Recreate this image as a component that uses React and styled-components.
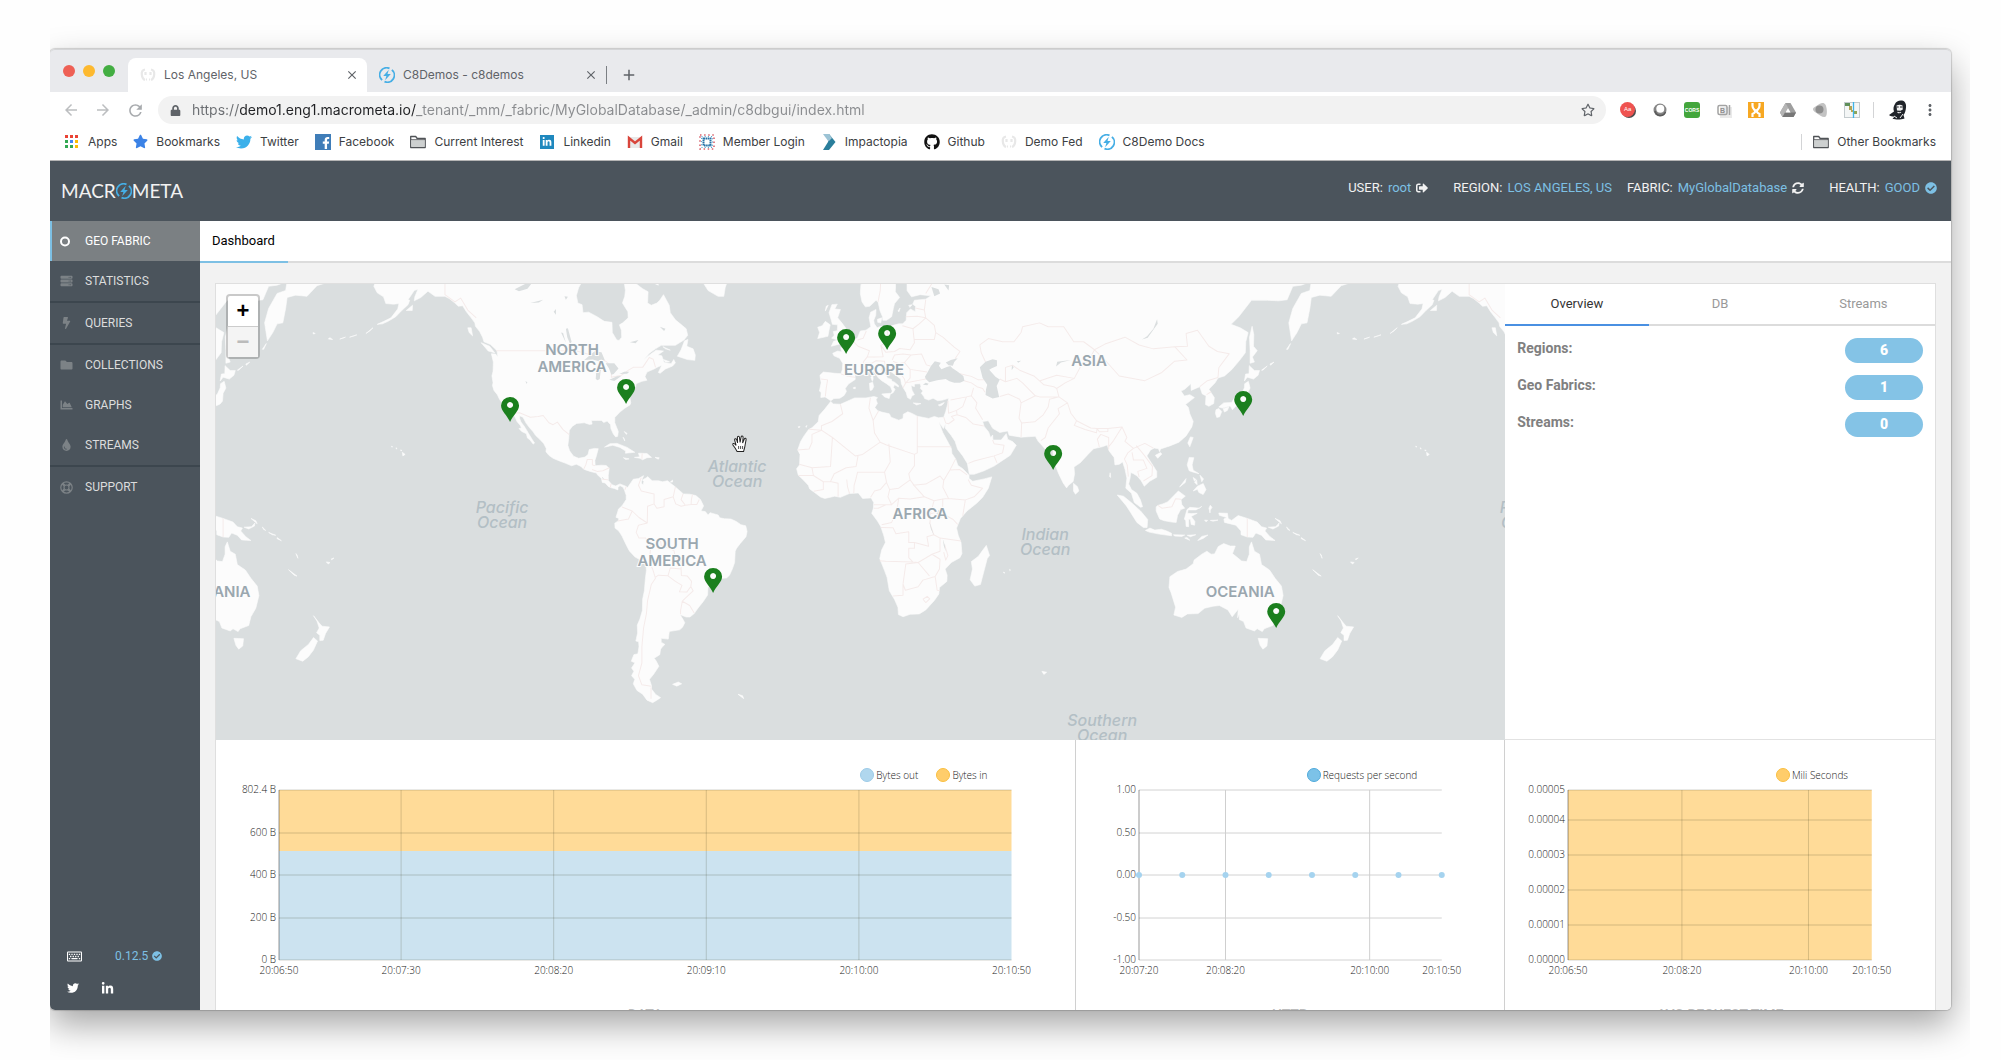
import React from "react";
import styled, { createGlobalStyle } from "styled-components";
import {
  FaBolt,
  FaChartArea,
  FaCheckCircle,
  FaFacebookF,
  FaFolder,
  FaGithub,
  FaLinkedinIn,
  FaLock,
  FaRegKeyboard,
  FaRegStar,
  FaServer,
  FaSignOutAlt,
  FaStar,
  FaSyncAlt,
  FaTint,
  FaTwitter,
} from "react-icons/fa";
import {
  MdAdd,
  MdArrowBack,
  MdArrowForward,
  MdClose,
  MdMoreVert,
  MdRefresh,
} from "react-icons/md";

const GlobalStyle = createGlobalStyle`
  * { box-sizing: border-box; }
  body { margin: 0; background: #fefefe; }
  button, input { font: inherit; margin: 0; padding: 0; border: 0; background: none; color: inherit; }
  a { color: inherit; text-decoration: none; }
  svg { display: block; flex: none; }
`;

/* ---------- brand marks and small drawings ---------- */

const C8Mark = ({ size = 16 }) => (
  <svg width={size} height={size} viewBox="0 0 16 16">
    <path
      d="M10.5 1.4a7 7 0 0 0-7.4 11.7M5.5 14.6a7 7 0 0 0 7.4-11.7"
      fill="none"
      stroke="#45aee5"
      strokeWidth="1.8"
    />
    <path d="M9.8 2.8 4.2 8.9h3.2l-1.3 4.4 5.7-6.2H8.5z" fill="#45aee5" />
  </svg>
);

const GhostMark = () => (
  <svg width="16" height="16" viewBox="0 0 16 16">
    <path
      d="M5 2.5C2.5 3 1.5 5 1.8 7.5 2 9.5 2.5 12 5 13M11 2.5c2.5.5 3.5 2.5 3.2 5-.2 2-.7 4.500-3.2 5.500M5.500 5v3M10.500 5v3M6 12.500h1M9 12.500h1"
      fill="none"
      stroke="#e8e8e8"
      strokeWidth="2.200"
    />
  </svg>
);

const appDots = [
  "#ea4335", "#ea4335", "#ea4335",
  "#34a853", "#4285f4", "#fbbc05",
  "#34a853", "#34a853", "#fbbc05",
];

const AppsMark = () => (
  <svg width="16" height="16" viewBox="0 0 16 16">
    {appDots.map((fill, i) => (
      <rect key={i} x={1 + (i % 3) * 5} y={1 + Math.floor(i / 3) * 5} width="3" height="3" fill={fill} />
    ))}
  </svg>
);

const FolderMark = () => (
  <svg width="16" height="16" viewBox="0 0 16 16">
    <path d="M.7 13.5v-11h5l1.5 2h8v9z" fill="#fff" stroke="#505357" strokeWidth="1.3" strokeLinejoin="round" />
    <path d="M1.4 6h13.2v6.9H1.4z" fill="#cdd0d0" />
    <path d="M1 5.6h14" stroke="#505357" strokeWidth=".8" />
  </svg>
);

const GmailMark = () => (
  <svg width="16" height="16" viewBox="0 0 16 16">
    <path d="M1 3h14v11H1z" fill="#e9e9e9" />
    <path d="M2 14V4l6 5 6-5v10" fill="none" stroke="#d9453b" strokeWidth="2.4" />
  </svg>
);

const MemberMark = () => (
  <svg width="16" height="16" viewBox="0 0 16 16">
    <rect x="4.500" y="4.500" width="7" height="7" fill="none" stroke="#2573a7" strokeWidth="2" strokeDasharray="1.6 .5" />
    <path d="M1 1h14v14H1z" fill="none" stroke="#d9636d" strokeWidth="1.6" strokeDasharray="1.5 2.6" />
    <path d="M2.500 2.500h11v11h-11z" fill="none" stroke="#4a9bca" strokeWidth="1" strokeDasharray="1 2.2" />
  </svg>
);

const ImpactMark = () => (
  <svg width="16" height="16" viewBox="0 0 16 16">
    <path d="M8 0l6.5 8L8 16H2l5-8z" fill="#2a7e9b" />
    <path d="M2 0h6l3 4-3.5 3.5z" fill="#9cc3d5" />
  </svg>
);

const FacebookMark = () => (
  <svg width="16" height="16" viewBox="0 0 16 16">
    <rect width="16" height="16" fill="#3f7db8" />
    <svg x="5" y="3" width="10" height="13">
      <FaFacebookF size={12} color="#fff" />
    </svg>
  </svg>
);

const LinkedinMark = () => (
  <svg width="16" height="16" viewBox="0 0 16 16">
    <rect x="1" y="1" width="14" height="14" fill="#1f88be" />
    <svg x="3" y="3" width="10" height="10">
      <FaLinkedinIn size={10} color="#fff" />
    </svg>
  </svg>
);

const GlossaryExt = () => (
  <svg width="16" height="16" viewBox="0 0 16 16">
    <circle cx="9" cy="9" r="7" fill="#4d4d4d" />
    <circle cx="7.5" cy="7.5" r="7.5" fill="#ef5350" />
    <text x="4" y="9" fontSize="6" fontFamily="Liberation Sans, sans-serif" fill="#fff">
      Aa
    </text>
  </svg>
);

const RingExt = () => (
  <svg width="16" height="16" viewBox="0 0 16 16">
    <circle cx="8" cy="8" r="6.5" fill="#858585" />
    <circle cx="8.3" cy="6.8" r="4" fill="#fff" />
    <path d="M3 9a5.5 5.5 0 0 0 10.500 1" stroke="#5a5a5a" strokeWidth="1.5" fill="none" />
  </svg>
);

const CorsExt = () => (
  <svg width="16" height="16" viewBox="0 0 16 16">
    <rect width="16" height="16" rx="3" fill="#43a63c" />
    <text
      x="8"
      y="10"
      textAnchor="middle"
      fontSize="5"
      fontWeight="700"
      fontFamily="Liberation Sans, sans-serif"
      fill="#fff"
    >
      CORS
    </text>
  </svg>
);

const BadgeExt = () => (
  <svg width="16" height="16" viewBox="0 0 16 16">
    <rect x="4" y="5" width="12" height="11" fill="#eaeaea" />
    <rect x="2" y="3.5" width="9" height="9" rx="1.5" fill="none" stroke="#a3a3a3" strokeWidth="1.5" />
    <path d="M13.5 3v10" stroke="#a3a3a3" strokeWidth="1.5" />
    <text x="4" y="10.500" fontSize="7" fontWeight="700" fontFamily="Liberation Sans, sans-serif" fill="#8f8f8f">
      B
    </text>
  </svg>
);

const HelixExt = () => (
  <svg width="16" height="16" viewBox="0 0 16 16">
    <rect width="16" height="16" fill="#f7a823" />
    <path d="M4.5 1v3q0 2 2 4t-2 4v3M11.5 1v3q0 2-2 4t2 4v3" fill="none" stroke="#fff" strokeWidth="2.2" />
    <path d="M6 8h4" stroke="#fff" strokeWidth="1.5" />
  </svg>
);

const DriveExt = () => (
  <svg width="16" height="16" viewBox="0 0 16 16">
    <path d="M5.5 1h5L16 10.5 13.500 15h-11L0 10.500z" fill="#9e9e9e" />
    <path d="M5.5 1 0 10.500 2.500 15 8 5.500z" fill="#b5b5b5" />
    <path d="M2.500 15h11l2.500-4.500H5z" fill="#777" />
    <path d="m8 6 2.6 4.500H5.400z" fill="#fff" />
  </svg>
);

const ConeExt = () => (
  <svg width="16" height="16" viewBox="0 0 16 16">
    <path d="M10 1c3-.5 4 2 4.500 5 .8 4 .5 9-2 9-3 0-5-2-8-4C1 9 0 7 2 5.500 4.500 4 7 1.500 10 1z" fill="#c3c3c3" />
    <circle cx="7.5" cy="7.5" r="4" fill="#8e8e8e" />
  </svg>
);

const GanttExt = () => (
  <svg width="16" height="16" viewBox="0 0 16 16">
    <rect x=".5" y=".5" width="15" height="15" fill="#f4f6f6" stroke="#c4cbce" />
    <rect x="1" y="1" width="5" height="3" fill="#5f8f5a" />
    <rect x="5" y="4" width="3" height="4" fill="#b3a355" />
    <rect x="7" y="8" width="3" height="2" fill="#c2a94e" />
    <rect x="10" y="9" width="3" height="3" fill="#8fa657" />
    <path d="M9.5 0v16" stroke="#3fb4e8" strokeWidth="1.3" />
  </svg>
);

const Avatar = () => (
  <svg width="20" height="20" viewBox="0 0 20 20">
    <path
      d="M7 4c1-2.500 4-4 7-3.500S18.500 4 18 7.500c-.3 3-1 5.500-2.500 7.500l1 3.500c-4 1.500-9 1-12 .5l2-2.500c-2 0-4.500 0-5.500-1.500l5-3.500C5 9 5.500 6 7 4z"
      fill="#20242a"
    />
    <path d="M8.500 5.500c2-1 4.500-1 6 0l.3 4-2.300 1.200-3.500-.2z" fill="#f3f3f3" />
    <path d="M8.500 7h2.200M12 7h2.500" stroke="#20242a" strokeWidth="1.2" />
    <path d="M9.500 12.300q2 1 3.500-.2" stroke="#eee" strokeWidth="1.2" fill="none" />
    <path d="m12 18 3-4M6 16l3 2" stroke="#eee" strokeWidth="1" />
  </svg>
);

const CircleIcon = () => (
  <svg viewBox="0 0 13 13">
    <circle cx="5" cy="6.5" r="4" fill="none" stroke="currentColor" strokeWidth="2" />
  </svg>
);

const LifebuoyIcon = () => (
  <svg viewBox="0 0 13 13">
    <g fill="none" stroke="currentColor">
      <circle cx="6.5" cy="6.5" r="5.7" strokeWidth="1.2" />
      <circle cx="6.5" cy="6.5" r="2.500" strokeWidth="1.2" />
      <path d="m2.600 2.600 2 2m3.800 3.800 2 2m0-7.800-2 2m-3.800 3.800-2 2" strokeWidth="2.2" />
    </g>
  </svg>
);

/* ---------- window and browser chrome ---------- */

const Page = styled.div`
  height: 100vh;
  padding: 49px 50px 50px;
`;

const Window = styled.div`
  height: 100%;
  display: flex;
  flex-direction: column;
  background: #fff;
  border-radius: 5px;
  box-shadow: 0 15px 35px rgba(0, 0, 0, 0.35), 0 0 1px 1px rgba(0, 0, 0, 0.16);
  clip-path: inset(-49px -19px -50px 0);
`;

const TabStrip = styled.div`
  height: 43px;
  flex: none;
  display: flex;
  align-items: flex-end;
  background: #e9eaed;
  border-top: 1px solid #d4d5d7;
  border-radius: 5px 5px 0 0;
  font: 12px/16px Inter, sans-serif;
  color: #5f6368;
`;

const Lights = styled.div`
  width: 78px;
  padding: 0 0 15px 13px;
  display: flex;
  gap: 8px;
`;

const Light = styled.button`
  width: 12px;
  height: 12px;
  border-radius: 50%;
  background: ${(props) => props.$color};
`;

const BrowserTab = styled.div`
  width: 239px;
  height: 34px;
  display: flex;
  align-items: center;
  gap: 8px;
  padding: 0 8px 0 12px;
  border-radius: 8px 8px 0 0;
  background: ${(props) => (props.$active ? "#fff" : "transparent")};

  span {
    flex: 1;
  }
`;

const NewTab = styled.button`
  height: 18px;
  margin-bottom: 8px;
  padding-left: 13px;
  border-left: 1px solid #7b7f83;
`;

const Toolbar = styled.div`
  height: 36px;
  flex: none;
  display: flex;
  align-items: center;
  padding: 0 12px 0 5px;
`;

const NavButton = styled.button`
  width: 32px;
  color: ${(props) => (props.$dim ? "#bcbec0" : "#a8abae")};

  svg {
    margin: 0 auto;
  }
`;

const Omnibox = styled.label`
  flex: 1;
  height: 28px;
  margin-left: 7px;
  display: flex;
  align-items: center;
  gap: 11px;
  padding: 0 11px 0 12px;
  border-radius: 14px;
  background: #f2f2f2;
  color: #5f6368;
`;

/* scheme and path are greyed, the host stays dark */
const Address = styled.input`
  flex: 1;
  font: 14px/20px Inter, sans-serif;
  color: transparent;
  background: linear-gradient(to right, #6b6e72 0 48px, #202124 48px 224px, #8a8c8f 224px);
  background-clip: text;
  outline: none;
`;

const Extensions = styled.div`
  display: flex;
  align-items: center;
  gap: 16px;
  padding: 0 13px 0 14px;
`;

const Rule = styled.span`
  width: 1px;
  height: 16px;
  background: #d3d4d6;
`;

const BookmarkBar = styled.nav`
  height: 33px;
  flex: none;
  display: flex;
  align-items: center;
  gap: 16px;
  padding: 0 15px 5px 14px;
  border-bottom: 1px solid #b5b5b5;
  font: 12px/16px Inter, sans-serif;
  color: #3c4043;
`;

const Bookmark = styled.a`
  display: flex;
  align-items: center;
  gap: 8px;
  white-space: nowrap;
`;

const OtherBookmarks = styled(Bookmark)`
  margin-left: auto;
  padding-left: 11px;
  border-left: 1px solid #d3d4d6;
`;

/* ---------- application ---------- */

const AppHeader = styled.header`
  height: 60px;
  flex: none;
  display: flex;
  align-items: center;
  justify-content: space-between;
  padding: 0 14px 0 11px;
  background: #4b545c;
  color: #f2f2f2;
  font: 13px/20px Roboto, sans-serif;
`;

const Logo = styled.a`
  display: flex;
  align-items: center;
  font: 19px/24px Lato, sans-serif;
`;

const Facts = styled.div`
  display: flex;
  align-items: center;
  padding-bottom: 6px;
`;

const Fact = styled.span`
  display: flex;
  align-items: center;
  gap: 5px;
  margin-left: ${(props) => props.$gap}px;

  a {
    color: #7dc0e4;
  }
`;

const Body = styled.div`
  flex: 1;
  min-height: 0;
  display: flex;
`;

const Sidebar = styled.aside`
  width: 150px;
  flex: none;
  display: flex;
  flex-direction: column;
  background: #4b545c;
  border-radius: 0 0 0 5px;
`;

const MenuItem = styled.a`
  height: ${(props) => (props.$ruled ? 42 : 40)}px;
  display: flex;
  align-items: center;
  gap: 12px;
  padding-left: ${(props) => (props.$active ? 8 : 10)}px;
  border-left: ${(props) => (props.$active ? "2px solid #7dc0e4" : "0")};
  border-bottom: ${(props) => (props.$ruled ? "2px solid #3c464e" : "0")};
  background: ${(props) => (props.$active ? "#7b8083" : "transparent")};
  color: ${(props) => (props.$active ? "#fff" : "#dcdddd")};
  font: 12px/16px Roboto, sans-serif;

  svg {
    width: 13px;
    color: ${(props) => (props.$active ? "#fff" : "#7c8286")};
  }
`;

const SideFoot = styled.div`
  margin-top: auto;
  padding: 0 17px 14px;
  color: #fff;
  font: 12px/16px Roboto, sans-serif;
`;

const SideRow = styled.div`
  height: 16px;
  display: flex;
  align-items: center;
  gap: ${(props) => props.$gap}px;
  margin-bottom: ${(props) => (props.$last ? 0 : 16)}px;
`;

const Version = styled.a`
  display: flex;
  align-items: center;
  gap: 4px;
  color: #7dc0e4;
`;

const Content = styled.main`
  flex: 1;
  min-width: 0;
  overflow: hidden;
  background: #f2f2f2;
  border-radius: 0 0 5px 0;
`;

const PageTabs = styled.div`
  height: 42px;
  background: #fff;
  border-bottom: 2px solid #dcdcdc;
`;

const PageTab = styled.button`
  width: 88px;
  height: 42px;
  padding-left: 12px;
  text-align: left;
  border-bottom: 2px solid #7dc0e4;
  font: 13px/16px Roboto, sans-serif;
  color: #000;
`;

const Board = styled.div`
  display: grid;
  grid-template-columns: 2fr 1fr 1fr;
  margin: 20px 15px 0;
  border: 1px solid #dfdfdf;
  background: #fff;
`;

const MapCell = styled.section`
  grid-column: span 2;
  position: relative;
  height: 456px;
  overflow: hidden;
  background: #dadedf;
`;

const ZoomControl = styled.div`
  position: absolute;
  top: 10px;
  left: 10px;
  display: flex;
  flex-direction: column;
  border: 2px solid rgba(0, 0, 0, 0.2);
  border-radius: 4px;
  background: #fff;
  background-clip: padding-box;
`;

const ZoomButton = styled.button`
  width: 30px;
  height: 30px;
  font: bold 22px/30px "Liberation Sans", sans-serif;
  color: #000;

  & + & {
    height: 31px;
    border-top: 1px solid #ccc;
  }

  &:disabled {
    background: #f4f4f4;
    color: #bbb;
  }
`;

const Summary = styled.section`
  border-bottom: 1px solid #e2e2e2;
`;

const SummaryTabs = styled.div`
  display: grid;
  grid-template-columns: repeat(3, 1fr);
  margin-bottom: 12px;
`;

const SummaryTab = styled.button`
  height: 42px;
  border-bottom: 2px solid ${(props) => (props.$active ? "#4a90e2" : "#dcdcdc")};
  color: ${(props) => (props.$active ? "#333" : "#999")};
  font: 13px/16px Roboto, sans-serif;
`;

const SummaryRow = styled.div`
  display: flex;
  justify-content: space-between;
  height: 37px;
  padding: 0 12px;
  color: #808080;
  font: bold 14px/20px Roboto, sans-serif;
`;

const Badge = styled.span`
  width: 78px;
  height: 25px;
  border-radius: 13px;
  background: #84c3e6;
  color: #fff;
  font-weight: 900;
  line-height: 25px;
  text-align: center;
`;

const ChartCell = styled.section`
  min-width: 0;
  padding: 27px 63px 0;
  border-right: 1px solid #d0d0d0;

  &:last-child {
    border-right: 0;
  }
`;

const Legend = styled.div`
  height: 16px;
  display: flex;
  justify-content: flex-end;
  gap: 18px;
  margin: 0 24px 7px 0;
  font: 300 10px/16px "Open Sans", sans-serif;
  color: #222;
`;

const LegendItem = styled.span`
  display: flex;
  align-items: center;
  gap: 2px;

  &::before {
    content: "";
    width: 12px;
    height: 12px;
    border-radius: 50%;
    background: ${(props) => props.$fill};
    border: 1px solid ${(props) => props.$edge};
  }
`;

const Plot = styled.svg`
  width: 100%;
  height: 170px;
  overflow: visible;

  text {
    font: 300 10px "Open Sans", sans-serif;
    fill: #222;
  }
`;

const ChartTitle = styled.h2`
  margin: 45px -63px 0;
  color: #bdbdbd;
  font: 500 14px/20px Roboto, sans-serif;
  text-align: center;
`;

/* ---------- world map, Mercator, 1024px per turn ---------- */

const WORLD = 1024;
const ZERO_X = 630;
const ZERO_Y = 227;

const project = (lon, lat) => [
  ZERO_X + (lon * WORLD) / 360,
  ZERO_Y - (WORLD / (2 * Math.PI)) * Math.log(Math.tan(Math.PI / 4 + (lat * Math.PI) / 360)),
];

const toPath = (ring) =>
  ring
    .trim()
    .split(/\s+/)
    .map((pair, i) => {
      const [x, y] = project(...pair.split(",").map(Number));
      return `${i ? "L" : "M"}${x.toFixed(1)} ${y.toFixed(1)}`;
    })
    .join("");

const land = [
  // Americas
  `-161,70 -161,64.6 -161.5,63.9 -160.8,63.6 -163,63.1 -164.8,63.2 -166,61.7 -164.8,60.6 -162.6,59.9 -161.8,58.7 -159,58.6 -157.2,58.7 -157.6,57.7 -160,56 -162.5,55.3 -164.8,54.7 -163,54.8 -161,55.3 -158.3,56.2 -156.2,57.4 -154,58.5 -153.4,59.3 -154,59.4 -151.8,61 -150.5,61.2 -151.6,59.9 -151.8,59.2 -149.5,59.8 -147,60.9 -144.5,60 -141,60 -139.5,59.6 -137.5,58.8 -136.3,58.2 -134.8,58.3 -133.5,57.2 -131.8,56 -130.5,55 -130.3,54.3 -128.8,53.2 -127.8,52 -127.3,51 -125,50.4 -123.2,49.3 -122.7,48.9 -122.4,47.5 -123.2,48.2 -124.7,48.3 -124,46.3 -124.1,44 -124.5,42.8 -124.1,41 -124.3,40.3 -123.8,39 -122.6,37.8 -121.9,36.6 -120.6,35 -120.4,34.4 -118.6,34 -117.3,33 -117,32.3 -116.2,31 -115.7,30 -114.5,28.8 -114.1,28 -115,27.8 -114,26.9 -112.4,26.2 -112,24.8 -111.2,24.3 -110,22.9 -109.5,23.2 -110.3,24.3 -111.3,25.8 -112.3,27.3 -113.2,28.6 -114.3,29.8 -114.8,31 -114.8,31.7 -113.6,31.3 -112.5,29.5 -111.2,28 -110,26.8 -109.2,25.7 -107.8,24.5 -106.3,23.1 -105.4,21.5 -105.5,20.4 -104.5,19.2 -103,18.2 -101,17.4 -98.8,16.6 -96.5,15.7 -94.8,16.2 -93.2,15.5 -92.2,14.5 -90,13.8 -87.7,13.2 -87.5,12.7 -86,11.3 -85.7,10 -84.7,9.8 -83.6,8.6 -82.8,8.2 -81.5,7.9 -80.2,7.4 -80.2,8.2 -79.5,8.9 -78.4,8.3 -77.9,7.3 -77.3,5.5 -77.3,4 -78.8,1.8 -80,0.7 -80.3,-0.3 -80.9,-2.2 -79.9,-2.6 -80,-3.4 -81.3,-4.3 -81.2,-6 -79.9,-7 -78.8,-8.8 -77.2,-12 -76.2,-13.9 -74.3,-15.9 -71.5,-17.4 -70.3,-18.4 -70.2,-20.5 -70.6,-23.5 -70.9,-27 -71.5,-29.5 -71.6,-33 -72.5,-35.5 -73.4,-37.2 -73.3,-39.4 -73.9,-41.5 -72.9,-41.7 -72.8,-43 -73.2,-44.8 -74.6,-45 -75.5,-46.6 -74.2,-47 -75.4,-48.2 -74.6,-49 -75.4,-50 -74.3,-50.8 -74.8,-51.8 -73.5,-53.2 -71.5,-54 -70,-55.2 -68,-55.7 -66.5,-55.2 -65.2,-54.7 -67,-54 -68.4,-52.9 -68.4,-52.2 -69.1,-50.8 -67.7,-49.7 -65.8,-47.8 -66.9,-46.4 -67.5,-45.9 -65.5,-45 -65.2,-43.6 -64.4,-42.9 -63.7,-42.4 -65,-41.8 -65,-40.8 -62.5,-41 -62.2,-39.1 -61.8,-38.9 -58.5,-38.5 -57.5,-37.8 -56.7,-36.5 -57.3,-35.6 -58.4,-34.2 -57.8,-34.4 -56.2,-34.9 -54.9,-34.9 -53.4,-33.9 -52.1,-32.3 -50.2,-30.3 -48.7,-28.3 -48.6,-26 -47,-24.6 -44.5,-23.1 -42,-22.9 -41,-22 -40,-20 -39.2,-17.8 -39,-14 -38.5,-13 -37.2,-11.3 -35.2,-9 -34.8,-7.2 -35.3,-5.2 -37,-4.8 -38.6,-3.7 -40.5,-2.8 -42.8,-2.7 -44.4,-2.4 -45,-1.4 -47.8,-0.6 -48.5,-1.4 -49.5,-0.2 -51,0 -50.1,1.8 -51.2,4 -52.8,5.4 -55,5.9 -57.2,6 -58.8,7.4 -60,8.4 -61.8,9.8 -62.8,10.6 -64.5,10.2 -66,10.6 -68.2,10.6 -69.8,12 -70.2,11.6 -71.5,10.9 -71.2,9.2 -72,9.8 -71.7,11.2 -71.2,12.3 -73,11.3 -74.8,11.1 -75.6,10 -76.8,8.2 -77.5,8.7 -79.5,9.5 -81,8.8 -82.3,9.2 -83.6,10.7 -83.6,12.5 -83.3,14.8 -84.3,15.8 -86,15.9 -88.2,15.7 -88.3,17.5 -87.8,19 -87.1,21.4 -88.5,21.5 -90.3,21.1 -90.7,19.5 -91.8,18.6 -94,18.2 -95.8,18.9 -97.2,20.7 -97.8,22.5 -97.5,24.8 -97.3,27.2 -96.3,28.5 -94.7,29.4 -92,29.6 -90.2,29.1 -89.3,29.2 -89.5,30.3 -87.5,30.3 -86,30.3 -85.2,29.7 -84,30.1 -82.8,29 -82.7,27.8 -81.8,26.1 -81,25.2 -80.3,25.4 -80.1,26.9 -81.3,29.6 -81.3,31.2 -79.5,32.8 -77.9,33.9 -76,34.9 -75.7,35.5 -76,36.9 -76.3,38.8 -75.7,37.8 -75,38.5 -74.9,39.2 -74,40 -73.8,40.8 -71.8,41.4 -70,41.7 -70.7,42.6 -70,43.8 -67.5,44.6 -66.2,45.1 -64.8,45.5 -66,43.7 -65.4,43.5 -63.5,44.6 -61,45.3 -60,46.1 -60.6,46.9 -61.5,45.9 -64,46.2 -64.8,47.8 -66.2,48 -64.2,48.9 -66.8,49.1 -69.5,47.8 -71,46.9 -69.2,48.4 -67,49.4 -65,50.2 -60,50.2 -57,51.4 -55.7,52.4 -56.2,53.8 -58.5,54.9 -60,55.6 -61.8,57 -62.2,58.4 -64.2,60.3 -65.5,59.3 -66.5,58.8 -68.5,58.4 -69.8,58.8 -69.6,60.8 -71.5,61.3 -74,62.2 -78,62.5 -77.6,61 -77.8,60 -78.6,58.8 -76.7,57.2 -76.6,56 -78.5,55 -79.7,54.6 -79,53.5 -78.9,52 -79.8,51.3 -80.6,51.4 -82.2,53 -82.3,55.1 -85,55.3 -87.5,56.2 -90.5,57.1 -92.5,57 -92.8,58.5 -94.3,58.8 -94.8,60.1 -94,61.5 -92.5,62.7 -90.7,63.5 -92,64.3 -88,64.3 -87,66 -86,70`,
  `-128.3,50.8 -125.3,50 -123.5,48.5 -125.8,48.9`,
  `-133,54 -131.8,54 -131.3,52.3 -132.5,53`,
  `-154.6,57.4 -152.4,58.4 -152.5,57.4`,
  `-59.3,47.7 -58,49.2 -56.8,51.2 -55.6,51.5 -56,50 -53.8,49.4 -53,48 -53.2,46.7 -55.8,46.9`,
  `-64.4,49.9 -61.8,49.1 -63.5,49.4`,
  `-64.2,46.9 -62.1,46.4 -63.5,46.3`,
  `-78,66 -78,64.4 -74,64.4 -71,62.9 -66,61.9 -66.5,62.8 -68.8,63.7 -65,63 -64.5,64 -66,66`,
  `-54,66 -52,64.4 -50.5,62.5 -48.5,61 -45,60 -43,60 -42.5,61.5 -41,63.5 -40,66`,
  `-84.9,21.9 -83,23 -80.5,23.1 -77,21.8 -74.3,20.2 -77.6,19.9 -77.5,20.6 -79.5,21.8 -82,22.5`,
  `-74.4,18.5 -72.5,18.2 -71.5,17.7 -70,18.4 -68.4,18.5 -70,19.8 -73,19.9 -72.6,18.7`,
  `-78.3,18.4 -76.3,18 -77.5,17.8`,
  `-67.2,18.5 -65.7,18.4 -66,17.9`,
  `-61.8,10.1 -61,10.8 -61,10.1`,
  `-78.4,25.1 -77.8,23.9 -78,24.6`,
  `-78,26.9 -77,26.3 -77.2,26`,
  `-61,-51.9 -59,-51.4 -57.8,-51.8 -59.5,-52.3`,
  `-38,-54 -36.4,-54.3 -36,-54.9`,
  `-156,20.2 -155,19.5 -155.8,19`,
  `-156.6,21 -156.1,20.8 -156.5,20.7`,
  `-158.2,21.7 -157.8,21.4 -158.1,21.3`,
  `-159.8,22.2 -159.4,22 -159.7,21.9`,
  `-167.5,53.3 -166.3,54 -168.8,52.8`,
  `-173,52.3 -172,52.5 -174.5,52`,
  `-177,51.8 -176,52 -178,51.6`,
  `178.5,51.9 179.5,51.5 178,51.6`,
  `172.6,53 173.4,52.8 172.7,52.7`,
  // Eurasia and Africa
  `12,80 12,66 11,64.6 9.5,63.7 7,62.9 5.2,62 5,60.5 5.6,59 6.8,58.1 8.3,58.2 10.5,59.3 11.3,58.9 11.9,57.4 12.8,56.2 12.9,55.5 14.2,55.5 16,56.2 16.6,57.8 17,58.7 18.8,59.8 17.3,60.8 17.4,62.2 19.5,63.4 21,64.6 24,65.8 25.3,65 22.5,63.6 21.4,62.5 21.4,61 23,59.9 26,60.3 29.8,60.1 28,59.5 24,59.3 23.4,58.6 24.4,58.2 24.3,57.2 22.6,57.7 21.3,57 21.1,55.5 19.9,54.8 18.5,54.8 16.5,54.5 14.2,53.9 12.3,54.3 10.9,54 9.9,54.8 9.7,55.5 10.4,56.5 10.5,57.6 8.6,57.1 8.1,56 8.7,54.2 7,53.5 5,53.3 4,51.9 2.5,51.1 1.6,50.2 0.2,49.7 -1.3,49.5 -1.9,49.7 -1.5,48.7 -3,48.9 -4.7,48.4 -4.3,47.8 -2.3,47.2 -1.2,46 -1.3,44.5 -1.8,43.4 -4,43.5 -8,43.8 -9.2,43 -8.8,41 -9.4,38.8 -8.8,38.4 -8.9,37 -7.4,37.2 -6.3,36.6 -5.4,36.1 -4.3,36.7 -2.2,36.8 -0.7,37.6 0.1,38.7 -0.3,39.5 0.8,40.7 3.2,41.9 3.1,43.1 4.5,43.4 6.5,43.1 8.8,44.4 10.3,43.5 11.2,42.4 12.5,41.6 14.2,40.8 15.6,40 16.2,38.8 15.7,38 16.6,38.4 17.2,39.3 16.6,39.8 17,40.5 18.4,39.9 18.4,40.3 17,41.2 16,41.5 16,41.9 14.5,42.3 13.6,43.5 12.3,44.3 12.4,45.4 13.6,45.7 13.7,45 14.5,45.2 15.2,44.2 17.5,43 19.2,42 19.4,40.8 20.2,39.5 21.1,38.4 21.6,37 22.6,36.5 23.2,37.5 24,37.8 23.2,39 22.8,40.3 24,40 24,40.7 26,40.8 26.3,40.1 26.1,39.5 27,38.8 26.4,38.2 27.3,37.3 27.6,36.7 29,36.3 30.6,36.8 32.2,36.1 34,36.3 36,36.8 35.8,35.5 35,33 34.3,31.3 32.5,31.1 31,31.5 29,30.9 25,31.6 23,32.5 21.7,32.9 20.1,32.2 20,30.9 18.5,30.4 15.8,31.3 15.2,32.3 12.5,32.8 11.1,33.2 10.1,34.2 11,35.3 10.5,36.4 11,37 9.8,37.3 7,36.9 3,36.9 0,35.8 -2,35.1 -4.5,35.2 -5.4,35.9 -6.2,35.1 -7.5,33.7 -9.5,31.8 -9.8,29.9 -12,28.1 -13.2,27.5 -14.8,25.5 -16,23.7 -17,21 -16.2,19.5 -16.4,16 -17.4,14.7 -16.8,12.5 -15,10.8 -13.3,9 -12.8,7.7 -11.2,6.6 -9,4.9 -7.5,4.4 -4,5.2 -2,4.8 1.1,6.1 4.3,6.3 5.8,4.4 7.2,4.5 8.8,4.6 9.7,3 9.6,1 9,-0.8 11,-3.5 12.2,-5.5 13.3,-8.8 13.8,-11 12.5,-13.5 11.8,-16.5 13.5,-20.5 14.4,-22.8 15.2,-27 17,-29.7 18.2,-32 18.4,-34.2 20,-34.8 22.5,-34.1 25.7,-34 28,-32.8 31,-30 32.6,-28 32.8,-26 35.4,-24 35.5,-22 34.8,-20 37,-17.8 40,-16.2 40.7,-14.8 40.4,-11 39.4,-8.5 38.8,-6 40.2,-2.6 42.5,0 46,2.8 48,4.8 50,8 51.2,11.9 48.5,11.2 44.5,10.4 43.2,11.4 43.2,12.5 41,14.7 39.3,15.8 38.5,18 37.2,19.8 37,21.5 35.5,24 34,26.5 32.6,29.8 34.2,27.8 34.9,29.4 34.8,28 36.8,25.8 38.3,23.8 39.2,21.2 41,19 42.6,16.5 43.3,12.8 45,12.8 48.5,14 52,15.6 55,17.5 57.7,19.2 59.8,22.5 58.5,23.7 56.8,24.4 56.3,26.2 54.5,24.2 51.6,24.2 51.5,25.8 50.8,24.9 50.1,26.7 48.5,28.5 48,30 50,30.2 51.5,27.9 54,26.6 56.8,27.1 57.3,25.7 61.5,25.1 66.5,25.4 67.5,23.8 69,22.3 70.3,20.9 72.7,21 72.8,19 73.5,16 74.7,13 76.3,9.8 77.5,8.1 78.2,9 79.8,10.3 80.3,13 80.1,15.3 82.3,16.7 85,19.5 87,21.4 90,22 91.8,22.6 92.4,20.7 94.2,18.5 94.5,16 96,16.2 97.2,17 98,14.5 98.7,11.5 98.3,8 100.3,6.2 101.3,3 103.5,1.3 104.2,1.5 103.4,4 102.2,6.2 100.3,7.5 99.3,9.5 99.8,11.5 100.1,13.4 101,13 102.3,12.2 103.7,10.6 104.8,8.7 106.7,10.4 109.2,11.8 109.2,13.8 107.2,16.8 105.7,19 107,21 108.3,21.6 109.8,21.4 110.2,20.4 110.5,21.3 113.8,22.3 117,23.5 119.5,25.5 121.5,28.3 122,30 120.8,32.3 120.3,34.2 119.3,35 122.4,37 120.8,37.8 118.9,37.4 117.7,38.8 119,39.3 121.2,40.8 121.3,39 124.3,40 125.2,38 126.5,37.5 126.3,35 127.5,34.5 129.2,35.3 129.4,37 127.5,39.3 129.7,41 130.7,42.3 133,42.8 135.5,44.4 138.3,46.7 140.3,48.5 140.5,51 141.3,53 138.5,54 135.3,54.7 138,56.2 142.5,59.3 148,59.3 152,59.2 155,59.4 157,61.7 160,61.9 163.5,62.5 163,61 160,60.5 157,57.8 155.6,55 156.6,51.2 158.5,53 160,54.8 162,55 163,57.8 163.5,59.8 166.5,60.2 170.5,60 174,61.8 179.3,62.6 178,64.5 180,66 180,80`,
  `-5.2,50 -3.5,50.3 1.3,51.1 0.8,51.6 1.7,52.7 0.3,53 -0.2,54 -1.5,55 -3,56 -2,57.6 -4,57.7 -3.1,58.6 -5,58.5 -6,57 -5.3,55.7 -4.8,54.7 -3,54.6 -3.1,53.4 -4.5,53.2 -4.2,52.4 -5.1,51.8 -3,51.4 -4.4,51.1`,
  `-10,51.7 -6.4,52.2 -6,53.5 -5.6,54.6 -7.3,55.3 -8.4,54.4 -10,54.1 -9.3,53`,
  `-7,58.2 -6.3,58.4 -7.3,57.3`,
  `11,55.7 12.5,56 12.2,55 11.1,55.1`,
  `18.2,57.3 19,57.9 18.6,57.2`,
  `22,58.4 23.2,58.5 22.4,58`,
  `8.7,42.5 9.4,43 9.5,42 9.2,41.4`,
  `8.2,40.9 9.3,41.2 9.7,40 9.1,39.1 8.4,39`,
  `12.5,38 15.6,38.2 15.1,36.7 13.5,37.2`,
  `23.6,35.5 26.3,35.3 24.8,34.9`,
  `32.4,34.9 34.5,35.6 33.8,34.9 32.9,34.6`,
  `2.4,39.6 3.2,39.9 3.2,39.4`,
  `-16.8,28.4 -16.2,28.5 -16.6,28`,
  `-14.2,28.3 -13.8,28.8 -14,28.2`,
  `49.3,-12 50.4,-15.5 49.6,-16.5 47.2,-25 45.2,-25.5 43.6,-23.5 44.4,-20 44,-17.5 46.5,-15.7 48,-13.7`,
  `55.3,-21 55.8,-21.2 55.5,-21.4`,
  `57.4,-20.1 57.8,-20.3 57.5,-20.5`,
  `68.8,-49 70.5,-49.2 69.5,-49.7`,
  `79.9,9.7 81.3,8.5 81.8,7 80.6,5.9 79.9,7`,
  `92.8,13.3 93,11.7 92.6,12`,
  `95.3,5.6 97.5,5.2 100.4,2.8 103.5,0 106,-3 105.8,-5.8 104.5,-5.8 102.2,-4 100,-0.5 98.5,1.8`,
  `105.2,-6.8 106.8,-6 108.5,-6.7 110.8,-6.4 112.7,-7 114.4,-7.8 114.4,-8.7 110,-8.1 106.5,-7.4`,
  `115,-8.3 119,-8.4 118,-8.9 115.5,-8.8`,
  `119.9,-8.5 122.9,-8.3 121,-9`,
  `119,-9.5 120.8,-10.2 119.8,-9.3`,
  `123.6,-10.3 125,-8.9 127.2,-8.4 125.5,-9.6`,
  `109,1.5 109.7,2 111.3,2.5 113,3.2 115.2,5.4 116.8,7 119.2,5.2 117.7,4 118,2.3 119,1 117.6,0.5 116.5,-1.5 116,-4 114.5,-3.9 111.8,-3.4 110.2,-2.8 109,0`,
  `119.8,0.5 120.8,1.3 124.2,1 125,1.6 123,0.4 120.2,0.4 120,-0.8 121.5,-0.9 123.4,-0.8 121.3,-1.9 122.6,-3.7 122.5,-5 121.3,-4.7 121,-2.8 120.4,-3 120.4,-5.5 119.5,-5.4 119.4,-3.4 118.9,-2.8`,
  `127.5,1 128,2 128.6,1.3 128,0.3 127.9,-0.7`,
  `128,-3.3 130.7,-3.2 129,-3.6`,
  `126,-3.2 127.1,-3.3 126.5,-3.8`,
  `131,-0.7 134,-0.8 134.3,-2.6 135.5,-3.3 137.8,-1.6 141,-2.6 144.5,-3.9 146,-5.5 147.8,-6 147.2,-7 149,-9 150.8,-10.3 147.5,-10.1 146,-8.5 144,-7.7 143,-9.2 141,-9.1 138.8,-8.3 138.8,-7 137,-5 133,-4 132.8,-2.8 133.8,-2.3 131.2,-1.5`,
  `148.4,-5.7 151,-5.5 152.2,-4.2 152,-5.3 150,-6.3`,
  `150.8,-2.6 153,-4.5 152.5,-3.4`,
  `154.8,-5.6 156,-6.8 155.3,-6.5`,
  `157,-7.5 159.5,-8.5 158.3,-8.3`,
  `160,-9.3 161.5,-10.4 160,-9.7`,
  `166.6,-14.8 167.3,-16.4 167,-15.3`,
  `164,-20.2 167,-22.3 166,-22`,
  `177.3,-17.6 178.6,-17.8 178,-18.3`,
  `179,-16.6 180,-16.3 179.2,-16.9`,
  `120.6,18.5 122.2,18.4 121.6,16 122,14.2 124,13 121.5,13.7 120.6,14 119.9,16`,
  `122,11.7 123,11 122.4,10.5`,
  `123.2,10.9 123.4,9.2 122.5,10`,
  `124.4,12.5 125.6,11.2 125,10.2`,
  `122,7 123.5,8.7 125.5,9.6 126.5,7.5 125.5,5.8 124,6.5 123.5,7.6`,
  `117.2,8.4 119.5,11.3 119.2,10`,
  `121,25.2 122,25 120.8,22 120.1,23.2`,
  `108.7,19.2 110.5,20.1 111,19.6 109.5,18.2`,
  `130,33.5 131,33.9 132,33 131.3,31.4 130.3,31.2 129.8,32.5`,
  `132.5,33.8 134.5,34.3 134,33.3 133,32.8`,
  `131,34.3 132.7,35.5 135.5,35.6 136.8,37.3 137.3,36.8 139,38 140,39.7 140.1,40.8 141.4,41.4 142,39.6 141,38.2 140.8,36 140,35.2 138.8,34.7 137,34.6 135.8,33.5 135,34.6 132.2,34`,
  `140,41.5 140.4,43.3 141.6,43.4 141.7,45.4 143.5,44.2 145.3,44.2 144.8,43 143.2,42 141,42.5`,
  `142,46 142,49 141.8,52 142.7,54.3 143.3,52.5 143.2,50 144.5,49 142.8,47.5 143.5,46.3`,
  `146,44.3 148,45.3 146.5,44.3`,
  `149,45.8 150.4,46.3 149.2,45.5`,
  `154.8,49.3 156.2,50.6 155.3,49.3`,
  `142.5,-10.8 143.5,-14 145.3,-15 146,-18.5 148.8,-20.3 150.8,-23 153,-25.5 153.6,-28.5 152.5,-32.3 150.8,-34.8 150,-37.3 147,-38.2 146.3,-39 144.5,-38.2 143.5,-38.8 140.6,-38 139.7,-36.2 138.2,-35.6 138.2,-34 137.6,-35.1 137.8,-32.6 135.7,-34.8 134.2,-32.8 131.2,-31.5 129,-31.7 126,-32.3 123.7,-33.9 120,-34 118,-35 115.2,-34.3 115.8,-32 114.2,-27.5 113.5,-26 113.8,-22.5 116.5,-20.8 119.5,-20 122,-18.2 122.3,-17 125,-15 126.8,-14 128.3,-15 129.5,-14.9 130.8,-12.4 132.7,-11.4 135,-12.2 136.8,-12.2 135.8,-14.8 139,-17.3 140.8,-17.5 141.7,-15 141.7,-12.5`,
  `144.8,-40.8 148.2,-40.9 147.9,-42.8 146.5,-43.6 145.5,-42.6`,
  `172.8,-34.5 174.8,-36.6 175.8,-37.5 178.4,-37.7 177,-39.5 176.2,-41.3 175,-41.4 175,-40 173.9,-39.3 174.8,-38 174,-36`,
  `172.8,-40.6 174.2,-41.5 172.8,-43.8 171,-45.5 169,-46.6 166.6,-46 168.3,-44 171,-42.4`,
];

const lakes = [
  `28,42 27.7,42.6 28.7,43.8 29.8,45.3 31.2,46.5 33.3,46.1 32.6,45.4 33.5,44.5 35.4,45.1 36.6,45.3 37.4,44.8 39,44 41.2,42.8 41.6,41.6 40,41 38,41 36.3,41.4 35,42 32,41.7 29.2,41.2`,
  `35,46.2 36.8,46.8 39.2,47.2 38,46.3 37.5,45.4 36,45.5`,
  `27,40.5 28,41 29,40.8 28.5,40.4`,
  `47,45 49,46.4 51.5,47 53,46.7 53,45.3 51.2,44.8 50.3,44.4 52.5,42.6 54,41.9 52.9,40.2 53.8,37.2 51.5,36.7 49,37.7 49.2,39.3 49.6,40.5 48,42.3`,
  `58.3,45.5 58.2,44.3 58.9,45`,
  `60,46.5 61.5,46.6 60.5,46.1`,
  `73.8,45.2 74.2,46.4 79,46.8 75.5,46.2`,
  `104,51.5 106,51.9 109.5,54.8 109.3,55.7 108,53.8 105.8,52.2`,
  `30,61.6 31,60 33,60.5 32.5,61.2`,
  `34.5,62 36,61 36.2,61.9`,
  `31.8,-0.8 31.8,-2.4 33.5,-2.3 34,0.2 32.5,0.3`,
  `29.2,-3.5 29.8,-6.3 30.9,-8.7 30,-6`,
  `34,-9.8 34.7,-12 35,-14.2 34.3,-12`,
  `-92,46.8 -90,48 -88.5,48.8 -86,48.6 -84.8,46.7 -87,46.5 -89,46.9`,
  `-88,42 -87.9,43.5 -87.2,45.3 -85.2,45.8 -86.3,44 -86.6,42 -87.4,41.7`,
  `-84.5,46 -81.5,46 -80,44.7 -81.7,43.3 -82.5,43.1 -83.4,44.8`,
  `-83.2,41.8 -81.5,41.5 -79,42.8 -80.5,42.7`,
  `-79.7,43.3 -77,43.4 -76.2,43.9 -78,43.9`,
  `-98.5,53.8 -97.8,53.9 -96.5,51 -97,50.5 -98,52`,
  `-100.2,53 -99.5,52.9 -98.5,50.8`,
  `-116.5,61.2 -112,62.3 -109.5,62.8 -112,61.3 -115,60.9`,
  `-111,58.8 -106.5,59.4 -108,58.9`,
  `-102.8,57.2 -102,57.7 -102,56.6`,
  `-99,60 -97.8,59.9 -98.5,59.4`,
  `-76,50.9 -73,51.4 -74,50.7`,
  `-65.5,54.2 -63.5,53.8 -64,53.3`,
  `-112.7,41.6 -112,41 -112.4,40.8`,
  `-85.9,12 -85,11.2 -85.6,11.4`,
  `-71.8,10.6 -71.2,10.5 -71.5,9.3`,
];

const borders = [
  `-123,49 -95,49 -89.5,48 -84.5,46.5 -82.5,45.3 -82.5,42.5 -79,43 -76.5,44.3 -74.8,45 -71.5,45 -69.2,47.4 -67.8,47 -67,45`,
  `-141,70 -141,60.3 -137.5,59 -135.5,59.7 -133,57.5 -130,56`,
  `-117,32.5 -114.8,32.6 -111,31.3 -108.2,31.5 -106.5,31.8 -104.5,29.6 -103,29 -101.5,29.8 -99.5,27.5 -97.3,25.9`,
  `-92.2,14.6 -91.5,16 -91,17.8 -89.2,17.8 -89.2,16 -88.3,15.7`,
  `-89.3,14.4 -87.5,13.8 -85.5,14 -83.2,15`,
  `-85.7,11.1 -83.7,10.9`,
  `-82.9,8.3 -82.6,9.5`,
  `-77.3,8.5 -77.8,7.4`,
  `-72,11.7 -73,9 -72,7 -67.5,6 -67.5,2.5 -69.8,1.7 -69.9,-4.2 -72.8,-2.3 -75.2,0 -78.8,1.4`,
  `-75.2,0 -76.5,-2.8 -80.3,-3.5`,
  `-69.9,-4.2 -73,-5 -73.8,-7.5 -72.8,-9.5 -70.5,-9.5 -69.5,-11 -68.7,-12.6 -69,-16 -69.5,-17.5 -68,-20 -67,-23 -68.5,-25 -69.8,-30 -70.2,-34 -71.2,-38 -71.8,-43 -71.8,-47 -73,-50 -71.8,-52 -68.5,-52.3`,
  `-68.6,-52.6 -68.6,-54.9`,
  `-69.5,-11 -65.3,-10 -65,-12 -60.5,-13.8 -60,-16.2 -58,-17.5 -58,-20 -61.8,-19.6 -62.6,-22.2 -66,-22 -67.2,-22.8`,
  `-62.6,-22.2 -60,-24 -57.7,-25.3 -58.6,-27.3 -56,-27.4 -54.6,-25.6 -54.3,-24 -55.8,-22.3 -57.9,-22.1 -58,-20`,
  `-54.6,-25.6 -53.8,-27 -57.6,-30.2 -58.2,-33 -58.2,-34`,
  `-57.6,-30.2 -55,-31.5 -53.4,-33.7`,
  `-67.5,2.5 -66.5,1 -64,1.5 -64,4 -60.8,5 -60,8.4`,
  `-60.8,5 -59.9,2.5 -58,1.7 -56.5,2 -54.5,2.3 -52.5,2.3 -51.6,4`,
  `-57.3,6 -58,4 -56.5,2`,
  `-54,5.8 -54.4,4 -54.5,2.3`,
  `-71.7,19.8 -71.8,18`,
  `11.2,59 12,61 12.2,63 14,66`,
  `-8.8,42 -6.5,41.8 -7,39.6 -7.3,37.3`,
  `-1.8,43.3 0.7,42.7 3.2,42.5`,
  `2.5,51.1 4.2,50 6.2,49.5 8.2,49 7.5,47.6 6,46.3 7,44 7.5,43.8`,
  `4,51.4 6,51.8 7.1,53.3`,
  `7.5,47.6 9.6,47.5 13,47.6 12.2,50.2 15,51 14.3,53.9`,
  `6.8,46 9,46 10.5,46.6 13.5,46.5 13.7,45.7`,
  `12.2,50.2 14,48.6 17,48.8 18.8,49.5 22.5,49.2 24,50.8 23.5,53.8 19.8,54.4`,
  `16.2,46.8 17,48 20,48.2 22.8,48 20.5,46.2 18.5,45.9 16.5,46.5`,
  `22.8,48 26.5,48.2 28.2,45.6 29.6,45.3`,
  `20.5,46.2 22.5,44.5 28.5,43.8`,
  `22.5,44.5 22.5,42.3 21,41 23,41.3 26.4,41.8 28,42`,
  `16,45 19,44.9 19.2,43.3 20.5,42 20.9,40.9 20,39.7`,
  `23.5,53.8 25.7,54.8 28,56 27.5,57.5 28,59.4`,
  `21,56.2 25,56.3 28,56`,
  `28,56 31,54.5 31.5,53 34,52 38,49.8 40,48.8 38.3,47.1`,
  `24,51.5 31,51.5 31.5,53`,
  `24.3,57.9 27.5,57.5`,
  `28,60.5 31,62.8 29.8,64.5`,
  `40,43.4 44,42.7 46.5,41.8 48.5,41.8`,
  `41.5,41.6 44,41 46,40 48,39.5 48.8,38.5`,
  `44.8,39.7 44,37.5 42.3,37.2 36.7,36.3`,
  `44,37.5 46,35.5 45.5,34 48,30.5`,
  `42.3,37.2 41,34.4 38.8,33.3 36,32.5 35.8,36`,
  `38.8,33.3 39,32 37,31.5 38,30.5 36,29.3 35,29.5`,
  `39,32 42,31.2 44.7,29.2 48.4,28.6`,
  `43,16.5 45,17.3 52,19 53,16.7`,
  `52,19 55,20 55.5,22.5 52,23 51.5,24.2`,
  `34.3,31.3 35,29.5`,
  `47.5,48.5 47,50.3 50,51.7 55,51 59,51 61.5,53 62,54.2 68,55 71,54.2 76.5,54.2 80,51 83.5,51 87.3,49.2 85.5,47 82.5,45.3 80.2,42.2 74,43 71,42.3 68,41.5 66,42.8 61,44.3 58.5,45.5 56,45 56,41.3 54,42`,
  `47.5,48.5 48.8,46.6 49,46.3`,
  `56,41.3 60,42.2 62,41 66.5,37.5 61.5,35.5 61,36.5 57,38 54,37.3`,
  `61.5,35.5 60.8,31 61.7,29.5 61.5,25.1`,
  `61.7,29.5 66.3,29.9 69.3,32 71,34.3 71.5,36.5 74.8,37.2 68,37.2 66.5,37.5`,
  `68,41.5 69.5,40.5 73,40 74,39.5 74.8,37.2`,
  `74,39.5 77,41 80.2,42.2`,
  `74.8,37.2 77.8,35.5 74.5,33.8 75,32.3 71,28 70,25 68.5,24`,
  `77.8,35.5 79,32.5 81,30.2 86,28 88.2,27.8 92,27.8 97,28.3 98.7,25 98,23.8 101,21.5 105,23.1 108,21.6`,
  `81,30.2 80.2,28.8 84,27.5 88,26.5 88.2,27.8`,
  `88.2,27.8 89,26.8 92,26.9 92,27.8`,
  `89,22 88.3,24.5 89.5,26 92.3,25 92.3,21.2`,
  `92.3,22 94,24 97,28.3`,
  `101,21.5 99,20 97.8,18 98.8,16 99.2,12`,
  `100.5,20.2 101,17.6 104.5,17.6 105.7,14.8 102.5,13.8 103,11.8`,
  `102,22.4 104.5,19.6 107.7,15.5 107.5,12.3 104.5,10.5`,
  `87.3,49.2 91,50.5 98,52 103,50.3 108,49.4 115.5,49.9 120,50 119.5,52.8 123.5,53.5 127.5,50 130.5,48.8 134.7,48.3 131,44.9 130.7,42.4`,
  `87.3,49.2 91,46.8 96,42.8 105,41.6 111,43.7 115.5,46.5 119.8,46.8 115.5,49.9`,
  `124.3,40 127,41.6 130.7,42.4`,
  `126.7,37.8 128.3,38.6`,
  `109.6,2 111,1 114.5,1.5 115.8,4.3 117.7,4.1`,
  `141,-2.6 141,-9.1`,
  `-2,35.1 -1.2,32.3 -5,30 -8.7,28.7 -8.7,27.3 -13,27.6`,
  `-8.7,27.3 -12,26 -12,23.5 -13,21.3 -17,21`,
  `-8.7,27.3 -4.8,25 3.2,19 5.8,19.5 12,23.5 14.2,22.6 24,19.5 24,15.7 22,13 22.5,10.9 18.5,8 15.3,7.5 14.2,10 13.5,13.6 15.5,17 15,23`,
  `8.5,36.9 8,34 9.5,30.3 10,26.4 12,23.5`,
  `9.5,30.3 11.4,33.1`,
  `25,31.6 25,20 24,19.5`,
  `25,22 37,22`,
  `-4.8,25 -5.5,15.5 -12,15 -16.5,16.2`,
  `-12,15 -11.5,12.4 -16.7,12.4`,
  `-11.5,12.4 -8,10.2 -8,7.5 -11.4,6.9`,
  `-8,10.2 -5.5,10.3 -2.8,9.7 -2.8,5.1`,
  `-5.5,10.3 -4.2,13 0,15 3.5,15.5 4.2,19`,
  `0.2,11 0.5,8.5 1.2,6.1`,
  `2.7,6.3 2.8,9 3.6,11.7 4,13.5 13.5,13.6`,
  `14.2,10 12,7.5 10,7 8.6,4.8`,
  `15.3,7.5 14.7,5 16,2.2 9.8,2.2`,
  `16,2.2 18.5,4.5 22.5,4.2 27.5,5 24,8.8 22.5,10.9`,
  `27.5,5 30.9,3.6 34,4.2 36,4.4 34,8.3 34.3,10.7 36.5,14.3 38.5,18`,
  `23.5,9 28,9.4 33,12.2 34.3,10.7`,
  `36.5,14.3 40,14.4 42.5,12.6`,
  `36,4.4 41.9,3.9 45,5 48,8 44,9 42.9,11`,
  `41.9,3.9 41,-1.7`,
  `34,4.2 33.9,0.1 29.6,-1 29.5,-4.5 30.8,-8.3 33,-9.5 40.4,-10.5`,
  `34,-1 37.6,-3 39.2,-4.7`,
  `30.9,3.6 29.6,-1`,
  `12.2,-5.8 16.5,-5.9 17.5,-8 22,-7.3 22,-11 24,-11 24,-13 22,-13 22,-16.2 23.4,-17.6 13.9,-17.4 11.8,-17.2`,
  `24,-11 29,-12.3 28.4,-9 30.8,-8.3`,
  `33,-9.5 33,-14 30.2,-15 25.3,-17.8 23.4,-17.6`,
  `30.2,-15 33,-16.7 32.8,-20 31.3,-22.4 27,-23.6 25.3,-25.7 20.8,-26.8 20,-24.8 20,-28.4 16.5,-28.6`,
  `20,-24.8 21,-18.3 25.3,-17.8 29.3,-22.2`,
  `31.3,-22.4 32,-26.8 32.9,-26.9`,
  `27,-29.6 28.5,-28.7 29.4,-29.5 28,-30.6 27,-29.6`,
  `34.6,-11.7 35.8,-15.5 35,-17 34.3,-14.3`,
  `14,2.2 11.3,1 9.8,1`,
  `18.5,4.5 17.8,0 16,-4 12.5,-4.8`,
];

const landPath = land.map((ring) => toPath(ring) + "Z").join("");
const lakePath = lakes.map((ring) => toPath(ring) + "Z").join("");
const borderPath = borders.map(toPath).join("");

/* the marker icon is centred on its place, so the tip falls below it */
const PIN_DROP = 14;

const markers = [
  [-118.24, 34.05],
  [-77.4, 39],
  [-46.7, -23.4],
  [0, 51.5],
  [14.4, 52.2],
  [72.8, 19.1],
  [139.7, 35.7],
  [151.2, -33.9],
];

const continents = [
  [356, 71, "NORTH", "AMERICA"],
  [456, 265, "SOUTH", "AMERICA"],
  [658, 91, "EUROPE"],
  [873, 82, "ASIA"],
  [704, 235, "AFRICA"],
  [1024, 313, "OCEANIA"],
];

const oceans = [
  [286, 229, "Pacific"],
  [521, 188, "Atlantic"],
  [829, 256, "Indian"],
  [886, 442, "Southern"],
];

const MapDrawing = styled.svg`
  width: 100%;
  height: 100%;

  text {
    text-anchor: middle;
    font: 600 15px Inter, sans-serif;
    fill: #9aa7af;
    stroke: #fcfcfc;
    stroke-width: 2px;
    paint-order: stroke;
  }

  .ocean {
    font: italic 500 16px Inter, sans-serif;
    fill: #b3bfc5;
    stroke: none;
  }
`;

const WorldMap = () => (
  <MapDrawing viewBox="0 0 1289 456" preserveAspectRatio="xMinYMid slice">
    <defs>
      <g id="world">
        <path d={landPath} fill="#fcfcfc" stroke="#fcfcfc" strokeWidth="0.6" strokeLinejoin="round" />
        <path d={borderPath} fill="none" stroke="#f5ebea" strokeWidth="1" strokeLinejoin="round" />
        <path d={lakePath} fill="#dadedf" />
        {continents.map(([x, y, ...lines]) =>
          lines.map((line, i) => (
            <text key={line + x} x={x} y={y + i * 17}>
              {line}
            </text>
          ))
        )}
        {oceans.map(([x, y, name]) => (
          <React.Fragment key={name}>
            <text className="ocean" x={x} y={y}>
              {name}
            </text>
            <text className="ocean" x={x} y={y + 15}>
              Ocean
            </text>
          </React.Fragment>
        ))}
      </g>
    </defs>
    {[-WORLD, 0, WORLD].map((shift) => (
      <use key={shift} href="#world" x={shift} />
    ))}
    {markers.map(([lon, lat]) => {
      const [x, y] = project(lon, lat);
      return (
        <path
          key={lon}
          transform={`translate(${Math.round(x)} ${Math.round(y + PIN_DROP)})`}
          d="M0 0C-3-7-9-11-9-16.500a9 8.500 0 0 1 18 0C9-11 3-7 0 0zM0-20a3 3 0 1 0 .01 0z"
          fill="#1b7f1e"
          fillRule="evenodd"
        />
      );
    })}
    <g transform="translate(516 151)" stroke="#222">
      <path
        d="M5 16.500 3 13 .8 10c-.6-1.500 1-2 1.900-1L4 10.500 2.500 5c-.2-1.500 1.500-1.800 2-.5L5.500 8 5.300 2.500c0-1.500 1.900-1.500 2.100 0L8 7.500 9 2c.3-1.500 2-1.200 2 .2L10.500 8l1.700-4c.6-1.300 2.100-.7 1.800.7L13 10c-.3 3-1 4-1.500 6.500z"
        fill="#fff"
        strokeWidth="1"
      />
      <path d="M6.500 11v3M8.500 11v3M10.500 11v3" strokeWidth=".8" />
    </g>
  </MapDrawing>
);

/* ---------- charts ---------- */

const Chart = ({ title, legend, xTicks, yTicks, areas = [], dots = [] }) => (
  <ChartCell>
    <Legend>
      {legend.map((item) => (
        <LegendItem key={item.name} $fill={item.fill} $edge={item.edge}>
          {item.name}
        </LegendItem>
      ))}
    </Legend>
    <Plot>
      {areas.map((area) => (
        <rect key={area.fill} x="0" y={area.top} width="100%" height={area.height} fill={area.fill} />
      ))}
      {yTicks.map(([y, label]) => (
        <g key={label}>
          <line x1="0" x2="100%" y1={y} y2={y} stroke={areas.length ? "rgba(60,60,30,.22)" : "#d2d2d2"} />
          <text x="-3" y={y + 3} textAnchor="end">
            {label}
          </text>
        </g>
      ))}
      {xTicks.map(([x, label]) => (
        <g key={label}>
          {x > 0 && x < 100 && (
            <line x1={`${x}%`} x2={`${x}%`} y1="0" y2="170" stroke={areas.length ? "rgba(60,60,30,.2)" : "#cfcfcf"} />
          )}
          <text x={`${x}%`} y="184" textAnchor="middle">
            {label}
          </text>
        </g>
      ))}
      <line x1="0" x2="0" y1="0" y2="170" stroke="rgba(0,0,0,.4)" />
      {dots.map((x) => (
        <circle key={x} cx={`${x}%`} cy="85" r="3" fill="#a5d3ef" />
      ))}
    </Plot>
    <ChartTitle>{title}</ChartTitle>
  </ChartCell>
);

const charts = [
  {
    title: "DATA",
    legend: [
      { name: "Bytes out", fill: "#b0d7ee", edge: "#9ccbe8" },
      { name: "Bytes in", fill: "#ffcd6b", edge: "#fabf3f" },
    ],
    xTicks: [
      [0, "20:06:50"],
      [16.67, "20:07:30"],
      [37.5, "20:08:20"],
      [58.33, "20:09:10"],
      [79.17, "20:10:00"],
      [100, "20:10:50"],
    ],
    yTicks: [
      [0, "802.4 B"],
      [43, "600 B"],
      [85, "400 B"],
      [128, "200 B"],
      [170, "0 B"],
    ],
    areas: [
      { top: 0, height: 61, fill: "#ffdb98" },
      { top: 61, height: 109, fill: "#cce3f0" },
    ],
  },
  {
    title: "HTTP",
    legend: [{ name: "Requests per second", fill: "#7cc2e8", edge: "#4faadb" }],
    xTicks: [
      [0, "20:07:20"],
      [28.57, "20:08:20"],
      [76.19, "20:10:00"],
      [100, "20:10:50"],
    ],
    yTicks: [
      [0, "1.00"],
      [43, "0.50"],
      [85, "0.00"],
      [128, "-0.50"],
      [170, "-1.00"],
    ],
    dots: [0, 14.29, 28.57, 42.86, 57.14, 71.43, 85.71, 100],
  },
  {
    title: "AVG REQUEST TIME",
    legend: [{ name: "Mili Seconds", fill: "#ffcd6b", edge: "#fabf3f" }],
    xTicks: [
      [0, "20:06:50"],
      [37.5, "20:08:20"],
      [79.17, "20:10:00"],
      [100, "20:10:50"],
    ],
    yTicks: [
      [0, "0.00005"],
      [30, "0.00004"],
      [65, "0.00003"],
      [100, "0.00002"],
      [135, "0.00001"],
      [170, "0.00000"],
    ],
    areas: [{ top: 0, height: 170, fill: "#ffdb98" }],
  },
];

/* ---------- page data ---------- */

const bookmarks = [
  ["Apps", <AppsMark />],
  ["Bookmarks", <FaStar size={15} color="#3b82e6" />],
  ["Twitter", <FaTwitter size={16} color="#3bb0ea" />],
  ["Facebook", <FacebookMark />],
  ["Current Interest", <FolderMark />],
  ["Linkedin", <LinkedinMark />],
  ["Gmail", <GmailMark />],
  ["Member Login", <MemberMark />],
  ["Impactopia", <ImpactMark />],
  ["Github", <FaGithub size={16} color="#111" />],
  ["Demo Fed", <GhostMark />],
  ["C8Demo Docs", <C8Mark />],
];

const menu = [
  { label: "GEO FABRIC", icon: CircleIcon, active: true },
  { label: "STATISTICS", icon: FaServer, ruled: true },
  { label: "QUERIES", icon: FaBolt, ruled: true },
  { label: "COLLECTIONS", icon: FaFolder },
  { label: "GRAPHS", icon: FaChartArea },
  { label: "STREAMS", icon: FaTint, ruled: true },
  { label: "SUPPORT", icon: LifebuoyIcon },
];

const summary = [
  ["Regions:", 6],
  ["Geo Fabrics:", 1],
  ["Streams:", 0],
];

const App = () => {
  return (
    <Page>
      <GlobalStyle />
      <Window>
        <TabStrip>
          <Lights>
            <Light $color="#ee6055" aria-label="Close window" />
            <Light $color="#fdb92f" aria-label="Minimize window" />
            <Light $color="#43ae42" aria-label="Zoom window" />
          </Lights>
          <BrowserTab $active>
            <GhostMark />
            <span>Los Angeles, US</span>
            <button aria-label="Close tab">
              <MdClose size={14} />
            </button>
          </BrowserTab>
          <BrowserTab>
            <C8Mark />
            <span>C8Demos - c8demos</span>
            <button aria-label="Close tab">
              <MdClose size={14} />
            </button>
          </BrowserTab>
          <NewTab aria-label="New tab">
            <MdAdd size={18} />
          </NewTab>
        </TabStrip>
        <Toolbar>
          <NavButton $dim aria-label="Back">
            <MdArrowBack size={18} />
          </NavButton>
          <NavButton $dim aria-label="Forward">
            <MdArrowForward size={18} />
          </NavButton>
          <NavButton aria-label="Reload">
            <MdRefresh size={19} />
          </NavButton>
          <Omnibox>
            <FaLock size={11} />
            <Address
              type="text"
              aria-label="Address"
              defaultValue="https://demo1.eng1.macrometa.io/_tenant/_mm/_fabric/MyGlobalDatabase/_admin/c8dbgui/index.html"
            />
            <FaRegStar size={14} />
          </Omnibox>
          <Extensions>
            <GlossaryExt />
            <RingExt />
            <CorsExt />
            <BadgeExt />
            <HelixExt />
            <DriveExt />
            <ConeExt />
            <GanttExt />
          </Extensions>
          <Rule />
          <Extensions>
            <Avatar />
          </Extensions>
          <button aria-label="Menu">
            <MdMoreVert size={18} color="#5f6368" />
          </button>
        </Toolbar>
        <BookmarkBar>
          {bookmarks.map(([name, icon]) => (
            <Bookmark key={name} href="#">
              {icon}
              {name}
            </Bookmark>
          ))}
          <OtherBookmarks href="#">
            <FolderMark />
            Other Bookmarks
          </OtherBookmarks>
        </BookmarkBar>

        <AppHeader>
          <Logo href="#">
            MACR
            <C8Mark />
            META
          </Logo>
          <Facts>
            <Fact $gap={0}>
              USER: <a href="#">root</a> <FaSignOutAlt size={12} />
            </Fact>
            <Fact $gap={25}>
              REGION: <a href="#">LOS ANGELES, US</a>
            </Fact>
            <Fact $gap={15}>
              FABRIC: <a href="#">MyGlobalDatabase</a> <FaSyncAlt size={12} />
            </Fact>
            <Fact $gap={25}>
              HEALTH: <a href="#">GOOD</a> <FaCheckCircle size={12} color="#7dc0e4" />
            </Fact>
          </Facts>
        </AppHeader>

        <Body>
          <Sidebar>
            {menu.map(({ label, icon: Icon, active, ruled }) => (
              <MenuItem key={label} href="#" $active={active} $ruled={ruled}>
                <Icon size={12} />
                {label}
              </MenuItem>
            ))}
            <SideFoot>
              <SideRow $gap={33}>
                <FaRegKeyboard size={15} />
                <Version href="#">
                  0.12.5 <FaCheckCircle size={10} />
                </Version>
              </SideRow>
              <SideRow $gap={22} $last>
                <a href="#" aria-label="Twitter">
                  <FaTwitter size={12} />
                </a>
                <a href="#" aria-label="LinkedIn">
                  <FaLinkedinIn size={13} />
                </a>
              </SideRow>
            </SideFoot>
          </Sidebar>
          <Content>
            <PageTabs>
              <PageTab>Dashboard</PageTab>
            </PageTabs>
            <Board>
              <MapCell>
                <WorldMap />
                <ZoomControl>
                  <ZoomButton aria-label="Zoom in">+</ZoomButton>
                  <ZoomButton aria-label="Zoom out" disabled>
                    −
                  </ZoomButton>
                </ZoomControl>
              </MapCell>
              <Summary>
                <SummaryTabs>
                  <SummaryTab $active>Overview</SummaryTab>
                  <SummaryTab>DB</SummaryTab>
                  <SummaryTab>Streams</SummaryTab>
                </SummaryTabs>
                {summary.map(([label, value]) => (
                  <SummaryRow key={label}>
                    {label}
                    <Badge>{value}</Badge>
                  </SummaryRow>
                ))}
              </Summary>
              {charts.map((chart) => (
                <Chart key={chart.title} {...chart} />
              ))}
            </Board>
          </Content>
        </Body>
      </Window>
    </Page>
  );
};

export default App;
